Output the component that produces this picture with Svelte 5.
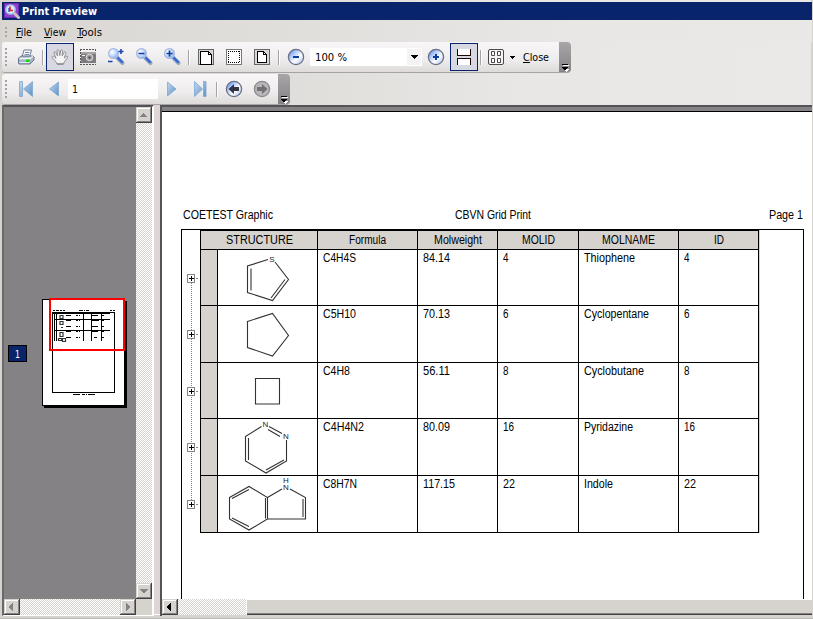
<script>
  const columns = [
    { title: 'Formula', w: 37 },
    { title: 'Molweight', w: 48 },
    { title: 'MOLID', w: 33 },
    { title: 'MOLNAME', w: 53 },
    { title: 'ID', w: 10 }
  ];

  // Each cell is [text, drawn width]; molecule coordinates are relative to the structure cell.
  const rows = [
    {
      cells: [['C4H4S', 33], ['84.14', 27], ['4', 5.5], ['Thiophene', 51], ['4', 5.5]],
      path: 'M50 9.500 L29.5 16 V42.5 L54.5 50.5 L70.5 29.5 L57 12 M33 18.500 V40.500 M67 29.500 L53 48',
      atoms: [['S', 54, 11.5]]
    },
    {
      cells: [['C5H10', 33], ['70.13', 27], ['6', 5.5], ['Cyclopentane', 65], ['6', 5.5]],
      path: 'M29.500 15.500 L54.500 7.500 L70.500 29.500 L54.500 50 L29.500 41.500 Z',
      atoms: []
    },
    {
      cells: [['C4H8', 27], ['56.11', 27], ['8', 5.5], ['Cyclobutane', 60], ['8', 5.5]],
      path: 'M37.500 15.500 H61.500 V41 H37.500 Z',
      atoms: []
    },
    {
      cells: [['C4H4N2', 41], ['80.09', 27], ['16', 11], ['Pyridazine', 49], ['16', 11]],
      path: 'M43.500 7.500 L27.500 17.500 V42 L48 54 L68.500 42 V21 M30.500 19 V41 M66 41 L48 51 M51 7.500 L64 14.500 M50 10.500 L62 17.500',
      atoms: [['N', 47.5, 8], ['N', 68, 20]]
    },
    {
      cells: [['C8H7N', 34], ['117.15', 32], ['22', 12], ['Indole', 29], ['22', 12]],
      path: 'M11.500 21.500 L31 10.500 L49.500 21.500 V43 L31 54 L11.500 43 Z M14 22.500 L31 13.500 M14 42 L31 50.500 M47.500 22 V42.500 M49.500 21.500 L64 13 M72 13 L87.500 21.500 V43 H49.500 M85 23 V41',
      atoms: [['N', 68, 14], ['H', 68, 7]]
    }
  ];
  const expanders = [278, 334, 391, 447, 504];
</script>

{#snippet label(text, w, base = 12, kind = 'grid')}
  <svg class="label {kind}" width={w} height="16"><text y={base} textLength={w} lengthAdjust="spacingAndGlyphs">{text}</text></svg>
{/snippet}

{#snippet grip()}
  <span class="grip"><i></i><i></i><i></i><i></i><i></i></span>
{/snippet}

{#snippet magnifier(kind)}
  <svg width="20" height="20" viewBox="0 0 20 20">
    <path d="M11 10.500 L16.500 16" stroke="#9aa6bd" stroke-width="4" stroke-linecap="round" />
    <path d="M11 10 L16 15" stroke="#2f68d8" stroke-width="2.400" stroke-linecap="round" />
    <circle cx="7.500" cy="6.500" r="4.900" fill="url(#glass)" stroke="#a9bbdc" stroke-width="1.200" />
    {#if kind === 'in'}<path d="M4.500 6.500 H10.500 M7.500 3.500 V9.500" stroke="#123a9c" stroke-width="1.700" />{/if}
    {#if kind === 'out'}<path d="M4.500 6.500 H10.500" stroke="#123a9c" stroke-width="1.700" />{/if}
    {#if kind === 'both'}<path d="M12.500 4.500 H17.500 M15 2 V7 M2 14.500 H6.500" stroke="#1746b0" stroke-width="1.600" />{/if}
  </svg>
{/snippet}

{#snippet ball(kind)}
  <svg width="18" height="18" viewBox="0 0 18 18">
    <circle cx="9" cy="9" r="7.600" fill={kind === 'fwd' ? '#b8b6b8' : 'url(#ball)'} stroke={kind === 'fwd' ? '#8c8a8c' : '#6b7180'} stroke-width="1.300" />
    {#if kind === 'minus'}<path d="M6 9 H12" stroke="#0a3c9c" stroke-width="2" />{/if}
    {#if kind === 'plus'}<path d="M6 9 H12 M9 6 V12" stroke="#0a3c9c" stroke-width="2" />{/if}
    {#if kind === 'back'}<path d="M3.500 9 L9 4 V7 H14 V11 H9 V14 Z" fill="#303442" />{/if}
    {#if kind === 'fwd'}<path d="M14.500 9 L9 4 V7 H4 V11 H9 V14 Z" fill="#737173" />{/if}
  </svg>
{/snippet}

{#snippet nav(kind)}
  <svg width="18" height="18" viewBox="0 0 18 18">
    {#if kind === 'first'}<path d="M2.500 1.500 H5.500 V16.500 H2.500 Z M15.500 1.500 V16.500 L6.500 9 Z" />{/if}
    {#if kind === 'prev'}<path d="M13.500 2 V16 L4.500 9 Z" />{/if}
    {#if kind === 'next'}<path d="M4.500 2 V16 L13 9 Z" />{/if}
    {#if kind === 'last'}<path d="M12.500 1.500 H15 V16.500 H12.500 Z M3.500 1.500 V16.500 L11.500 9 Z" />{/if}
  </svg>
{/snippet}

{#snippet tail()}
  <span class="tail">
    <svg width="12" height="31" viewBox="0 0 12 31" shape-rendering="crispEdges">
      <path d="M4 23 H10 V24 H4 Z M5 27 H10 V28 H9 V29 H8 V30 H7 V29 H6 V28 H5 Z" fill="#fff" />
      <path d="M3 22 H9 V23 H3 Z M3 25 H9 V26 H8 V27 H7 V28 H5 V27 H4 V26 H3 Z" fill="#000" />
    </svg>
  </span>
{/snippet}

{#snippet arrow(dir, color)}
  <span class="sbtn">
    <svg width="16" height="16" viewBox="0 0 16 16" shape-rendering="crispEdges" fill={color}>
      {#if dir === 'up'}<path d="M4 10 V9 H5 V8 H6 V7 H7 V6 H8 V7 H9 V8 H10 V9 H11 V10 Z" />{/if}
      {#if dir === 'down'}<path d="M4 6 H12 V7 H11 V8 H10 V9 H9 V10 H7 V9 H6 V8 H5 V7 H4 Z" />{/if}
      {#if dir === 'left'}<path d="M9 4 V12 H8 V11 H7 V10 H6 V9 H5 V7 H6 V6 H7 V5 H8 V4 Z" />{/if}
      {#if dir === 'right'}<path d="M6 4 V12 H7 V11 H8 V10 H9 V9 H10 V7 H9 V6 H8 V5 H7 V4 Z" />{/if}
    </svg>
  </span>
{/snippet}

<div class="window">
  <svg class="defs" width="0" height="0">
    <defs>
      <radialGradient id="glass" cx="35%" cy="35%" r="75%"><stop offset="0" stop-color="#fff" /><stop offset=".5" stop-color="#c5dbff" /><stop offset="1" stop-color="#7ca6ee" /></radialGradient>
      <linearGradient id="ball" x1="0" y1="0" x2="1" y2="1"><stop offset="0" stop-color="#2e64dc" /><stop offset=".3" stop-color="#a9c5ff" /><stop offset=".6" stop-color="#fff" /><stop offset="1" stop-color="#8fb0f4" /></linearGradient>
      <linearGradient id="tri" x1="0" y1="0" x2="1" y2="1"><stop offset="0" stop-color="#c4daee" /><stop offset="1" stop-color="#5d91c6" /></linearGradient>
    </defs>
  </svg>

  <header class="title">
    <svg width="16" height="16" viewBox="0 0 16 16">
      <rect width="15" height="15" fill="#6a2bb0" />
      <rect x="1" y="1" width="13" height="13" fill="#8d42cc" />
      <circle cx="6.500" cy="6.500" r="4.600" fill="#d9ecff" stroke="#a8c5ee" stroke-width="1.500" />
      <path d="M6 3.500 V7.500 H9" fill="none" stroke="#e2202c" stroke-width="1.600" />
      <path d="M5 5 V9" fill="none" stroke="#243ca0" stroke-width="1.200" />
      <path d="M10.500 10.500 L14.500 14.500" stroke="#c7c3c0" stroke-width="3" stroke-linecap="round" />
    </svg>
    {@render label('Print Preview', 75, 12, 'ui bold')}
  </header>

  <nav class="menu">
    <span class="grip short"><i></i><i></i><i></i></span>
    <span class="item first">{@render label('File', 16, 12, 'ui')}<u style:width="6px"></u></span>
    <span class="item view">{@render label('View', 22, 12, 'ui')}<u style:width="7px"></u></span>
    <span class="item tools">{@render label('Tools', 25, 12, 'ui')}<u style:width="6px"></u></span>
  </nav>

  <div class="bar main-bar">
    {@render grip()}
    <span class="slot">
      <svg width="18" height="18" viewBox="0 0 18 18">
        <path d="M7 2 H14.500 L12.500 9 H5 Z" fill="#fff" stroke="#6c7c98" />
        <path d="M8 4.500 H12.500 M7.500 6.500 H12" stroke="#6f86ae" />
        <path d="M1.500 10 L4.500 8 H15.500 L17 9 V12 L13 16 H2 L1.500 15 Z" fill="#aab5c6" stroke="#66758c" />
        <path d="M2.500 10.500 H12.500 L16 8.500" fill="none" stroke="#f4f7fb" stroke-width="1.300" />
        <path d="M2.500 14.500 H12.500" stroke="#e9edf3" stroke-width="1.200" />
        <rect x="9" y="11.500" width="3.500" height="2.500" fill="#15d515" />
      </svg>
    </span>
    <span class="sep"></span>
    <span class="slot on">
      <svg width="18" height="18" viewBox="0 0 18 18">
        <path d="M6 16 C5.500 13.500 2.500 11.500 1.200 9.500 C.8 8 2.500 7.800 3.500 9 L5 10.300 L3 5 C2.800 3.500 4.300 3.200 4.800 4.600 L6.600 8 L6 2.800 C6 1.300 7.700 1.200 8 2.600 L8.800 7.600 L9.700 2.600 C10 1.300 11.600 1.600 11.500 3 L11.200 8 L13.200 4.300 C13.900 3.100 15.200 3.800 14.800 5.200 L13.300 10 L15.500 8.300 C16.700 7.800 17.200 9 16.200 10 L13.500 13.500 L12.500 16 Z" fill="#f5f4f4" stroke="#929092" stroke-width="1" />
        <path d="M6 16 H12.500" stroke="#777" />
      </svg>
    </span>
    <span class="slot">
      <svg width="18" height="18" viewBox="0 0 18 18" shape-rendering="crispEdges">
        <path d="M1.500 1 V17 M1 1.500 H17 M1 16.500 H17 M16.500 1 V17" stroke="#565556" stroke-dasharray="2 1" fill="none" />
        <rect x="2" y="4" width="15" height="11" fill="#7d7b7d" />
        <rect x="2" y="4" width="15" height="2" fill="#a5a3a5" />
        <g shape-rendering="auto">
          <circle cx="10.500" cy="9.500" r="3.300" fill="#a2a0a2" stroke="#dcdadc" />
          <circle cx="10.500" cy="9.500" r="1.300" fill="#5a585a" />
        </g>
        <rect x="3" y="7" width="3" height="1" fill="#eee" />
      </svg>
    </span>
    <span class="slot">{@render magnifier('both')}</span>
    <span class="slot">{@render magnifier('out')}</span>
    <span class="slot">{@render magnifier('in')}</span>
    <span class="sep"></span>
    <span class="slot">
      <svg width="16" height="16" viewBox="0 0 16 16" shape-rendering="crispEdges">
        <rect x=".5" y=".5" width="15" height="15" fill="#dad7da" stroke="#666" />
        <path d="M2.500 15 V2.500 H10.500 L13.500 5.500 V15 Z" fill="#fff" stroke="#000" /><path d="M10.500 2 V5.500 H14" fill="none" stroke="#000" />
      </svg>
    </span>
    <span class="slot">
      <svg width="16" height="16" viewBox="0 0 16 16" shape-rendering="crispEdges">
        <rect x=".5" y=".5" width="15" height="15" fill="#fff" stroke="#777" />
        <path d="M2 2.500 H14 M2 13.500 H14 M2.500 2 V14 M13.500 2 V14" fill="none" stroke="#000" stroke-dasharray="1 1" />
      </svg>
    </span>
    <span class="slot">
      <svg width="16" height="16" viewBox="0 0 16 16" shape-rendering="crispEdges">
        <rect x=".5" y=".5" width="15" height="15" fill="#dad7da" stroke="#666" />
        <path d="M3.500 2.500 H9.500 L12.500 5.500 V13.500 H3.500 Z" fill="#fff" stroke="#000" /><path d="M9.500 2 V5.500 H13" fill="none" stroke="#000" />
      </svg>
    </span>
    <span class="sep"></span>
    <span class="slot">{@render ball('minus')}</span>
    <span class="combo">
      {@render label('100 %', 32, 12, 'ui')}
      <span class="drop"><svg width="7" height="4" shape-rendering="crispEdges"><path d="M0 0 H7 V1 H6 V2 H5 V3 H4 V4 H3 V3 H2 V2 H1 V1 H0 Z" /></svg></span>
    </span>
    <span class="slot">{@render ball('plus')}</span>
    <span class="slot on">
      <svg width="16" height="18" viewBox="0 0 16 18" shape-rendering="crispEdges">
        <path d="M2 1 H14 V7 H2 Z M2 11 H14 V17 H2 Z" fill="#fff" />
        <path d="M1.500 1 V7.500 H14.500 V1 M1.500 17 V10.500 H14.500 V17" fill="none" stroke="#210808" />
      </svg>
    </span>
    <span class="sep"></span>
    <span class="tiles">
      <svg width="16" height="16" viewBox="0 0 16 16">
        <rect x=".5" y=".5" width="15" height="15" rx="1.500" fill="#f6f4f5" stroke="#4a4a4a" />
        <path d="M3.500 2.500 H6.500 V6.500 H3.500 Z M9.500 2.500 H12.500 V6.500 H9.500 Z M3.500 9.500 H6.500 V13.500 H3.500 Z M9.500 9.500 H12.500 V13.500 H9.500 Z" fill="#fff" stroke="#4a4a4a" />
      </svg>
      <svg width="5" height="3" shape-rendering="crispEdges"><path d="M0 0 H5 V1 H4 V2 H3 V3 H2 V2 H1 V1 H0 Z" /></svg>
    </span>
    <span class="item close">{@render label('Close', 26, 12, 'ui')}<u style:width="7px"></u></span>
    {@render tail()}
  </div>

  <div class="bar page-bar">
    {@render grip()}
    <span class="slot nav">{@render nav('first')}</span>
    <span class="slot nav">{@render nav('prev')}</span>
    <span class="page-no">{@render label('1', 6, 12, 'ui')}</span>
    <span class="slot nav">{@render nav('next')}</span>
    <span class="slot nav">{@render nav('last')}</span>
    <span class="sep"></span>
    <span class="slot">{@render ball('back')}</span>
    <span class="slot">{@render ball('fwd')}</span>
    {@render tail()}
  </div>

  <div class="body">
    <section class="thumbs">
      <div class="canvas">
        <span class="badge">{@render label('1', 5, 12, 'ui')}</span>
        <svg class="thumb" width="86" height="110" viewBox="0 0 86 110" shape-rendering="crispEdges">
          <rect x="2" y="3" width="83" height="107" />
          <rect x=".5" y="1.500" width="82" height="106" fill="#fff" stroke="#000" />
          <rect x="10.500" y="14.500" width="62" height="80" fill="none" stroke="#000" />
          <g stroke="#000" fill="none">
            <path d="M11 12.500 H23" stroke-dasharray="2 1 3 1" />
            <path d="M37 12.500 H47" stroke-dasharray="4 1 1 1" />
            <path d="M68 12.500 H73" stroke-dasharray="2 1" />
            <path d="M11 15.500 H68 M13 21.500 H68 M13 32.500 H68 M12.500 15 V43 M14.500 15 V43 M41.500 15 V43 M49.500 15 V43 M59.500 15 V43" />
            <path d="M24 17.500 H29 M24 22.500 H29 M24 28.500 H29 M24 33.500 H29 M24 39.500 H29 M50 17.500 H56 M50 22.500 H57 M50 28.500 H56 M50 33.500 H56 M52 39.500 H55 M60 17.500 H62 M60 22.500 H62 M60 28.500 H62 M60 33.500 H62 M60 39.500 H62" />
            <path d="M34 17.500 H38 M34 22.500 H38 M34 28.500 H38 M34 33.500 H38 M34 39.500 H38" stroke-dasharray="2 1" />
            <path d="M18 17.500 H21 V20.500 H18 Z M18 23.500 H21 V26.500 H18 Z M19 29.500 H21 M18 34.500 H21 V38.500 H18 Z M16.500 40.500 H19.500 V42.500 H16.500 Z M20.500 40.500 H23.500 V43.500 H20.500 Z" stroke="#333" stroke-width="1.200" shape-rendering="auto" />
            <path d="M31 96.500 H54" stroke-dasharray="7 2 3 1 1 1" />
          </g>
          <rect x="8" y="1" width="74" height="51" fill="none" stroke="#f00" stroke-width="2" />
        </svg>
      </div>
      <div class="vscroll">{@render arrow('up', '#848284')}{@render arrow('down', '#848284')}</div>
      <div class="hscroll">{@render arrow('left', '#848284')}{@render arrow('right', '#848284')}</div>
    </section>

    <section class="preview">
      <div class="paper">
        <div class="caption">
          <span>{@render label('COETEST Graphic', 90)}</span>
          {@render label('CBVN Grid Print', 76)}
          <span>{@render label('Page 1', 34)}</span>
        </div>
        <div class="frame">
          <svg class="tree" width="18" height="302" viewBox="182 230 18 302" shape-rendering="crispEdges">
            <path d="M191.500 283 V500" stroke="#848284" stroke-dasharray="1 1" />
            {#each expanders as y}
              <path d="M196 {y + .5} H199" stroke="#848284" stroke-dasharray="2 1" />
              <rect x="187.500" y={y - 3.5} width="7" height="8" fill="#fff" stroke="#848284" />
              <path d="M189 {y + .5} H194 M191.500 {y - 2} V{y + 3}" stroke="#000" />
            {/each}
          </svg>
          <div class="table">
            <div class="row head">
              <div class="cell wide">{@render label('STRUCTURE', 67)}</div>
              {#each columns as c}<div class="cell">{@render label(c.title, c.w)}</div>{/each}
            </div>
            {#each rows as r}
              <div class="row">
                <div class="cell selector"></div>
                <div class="cell structure">
                  <svg width="99" height="56" viewBox="0 0 99 56">
                    <path d={r.path} fill="none" stroke="#333" stroke-width="1.100" />
                    {#each r.atoms as [s, x, y]}<text {x} {y}>{s}</text>{/each}
                  </svg>
                </div>
                {#each r.cells as [text, w]}<div class="cell">{@render label(text, w)}</div>{/each}
              </div>
            {/each}
          </div>
        </div>
      </div>
      <div class="hscroll wide-scroll">{@render arrow('left', '#000')}<span class="thumb-bar"></span></div>
    </section>
  </div>
</div>

<style>
  :global(body) { margin: 0; overflow: hidden; }
  .window { box-sizing: border-box; width: 813px; height: 619px; padding: 2px 1px 3px 2px; background: linear-gradient(90deg, #d6d3ce, #e8e7e5 65%, #eae9e7) 0 0 / 811px 105px no-repeat #d6d3ce; border-bottom: 1px solid #bbb8b8; display: flex; flex-direction: column; overflow: hidden; }
  svg { display: block; flex: none; }
  .defs { position: absolute; }
  .label { overflow: visible; }
  .grid { font: 12px "Liberation Sans", Arial, sans-serif; }
  .ui { font: 11px "DejaVu Sans Condensed", "DejaVu Sans", sans-serif; }
  .bold { font-weight: bold; fill: #fff; }
  .title { height: 18px; flex: none; background: #08246b; display: flex; align-items: center; padding-left: 2px; gap: 2px; }
  .menu { height: 22px; padding-top: 1px; box-sizing: border-box; flex: none; display: flex; align-items: center; background: linear-gradient(90deg, #d9d6d2, #e8e7e5 70%, #e9e8e6); }
  .item { display: flex; flex-direction: column; position: relative; }
  .item u { position: absolute; left: 0; top: 13px; height: 1px; background: #000; }
  .first { margin-left: 4px; }
  .view { margin-left: 12px; }
  .tools { margin-left: 11px; }
  .grip { width: 10px; flex: none; display: flex; flex-direction: column; gap: 2px; padding-left: 3px; box-sizing: border-box; }
  .grip i { width: 2px; height: 2px; background: #a5a2a2; }
  .bar { height: 31px; flex: none; box-sizing: border-box; display: flex; align-items: center; border-bottom: 1px solid #a6a3a6; border-radius: 3px 4px 4px 3px; background: linear-gradient(#f8f6f6, #eeecec 60%, #dedada); overflow: hidden; }
  .main-bar { width: 569px; margin-bottom: 1px; }
  .page-bar { width: 288px; }
  .slot { width: 28px; height: 28px; flex: none; box-sizing: border-box; display: flex; align-items: center; justify-content: center; }
  .on { border: 1px solid #08246b; background: #d7d8e1; }
  .nav { fill: url(#tri); stroke: #7da7d0; stroke-width: .8; }
  .sep { width: 6px; height: 15px; flex: none; background: linear-gradient(#a6a3a6, #a6a3a6) 2px 0 / 1px 100% no-repeat, linear-gradient(#fff, #fff) 3px 0 / 1px 100% no-repeat; }
  .combo { width: 112px; height: 18px; background: #fff; display: flex; align-items: center; justify-content: space-between; padding-left: 5px; box-sizing: border-box; }
  .drop { width: 14px; height: 16px; margin-right: 1px; background: #f4f2f2; display: flex; align-items: center; justify-content: center; }
  .page-no { width: 90px; height: 20px; box-sizing: border-box; padding: 2px 4px; background: #fff; }
  .tiles { display: flex; align-items: center; gap: 6px; margin-left: 4px; }
  .close { margin-left: 8px; }
  .tail { margin-left: auto; width: 12px; height: 31px; background: linear-gradient(#a8a6a8, #848284); flex: none; }

  .body { flex: 1; min-height: 0; display: flex; background: #ded6d6; border-bottom: 1px solid #fff; }
  .thumbs { box-sizing: border-box; width: 152px; height: 511px; display: grid; grid-template: 492px 16px / 132px 16px; background: #d6d3ce; border: solid #fff; border-width: 2px 2px 1px 2px; border-top-color: #555355; border-left: 2px solid #6a686a; margin-right: 6px; }
  .canvas { background: #848284; position: relative; }
  .badge { position: absolute; left: 4px; top: 238px; width: 19px; height: 17px; box-sizing: border-box; border: 1px solid #000; background: #08246b; fill: #fff; display: flex; justify-content: center; }
  .thumb { position: absolute; left: 38px; top: 191px; }
  .vscroll, .hscroll { display: flex; justify-content: space-between; background: repeating-conic-gradient(#fff 0 25%, #d6d3ce 0 50%) 0 0 / 2px 2px; }
  .vscroll { flex-direction: column; }
  .sbtn { width: 16px; height: 16px; flex: none; background: #d6d3ce; box-shadow: inset -1px -1px #424142, inset 1px 1px #d6d3ce, inset -2px -2px #848284, inset 2px 2px #fff; }
  .preview { flex: 1; min-width: 0; height: 511px; box-sizing: border-box; border-top: 2px solid #555355; border-left: 2px solid #555355; display: flex; flex-direction: column; }
  .paper { height: 492px; flex: none; box-sizing: border-box; background: #fff; border-top: 4px solid #848284; box-shadow: inset 0 1px #000; padding: 96px 8px 0 19px; overflow: hidden; }
  .caption { display: grid; grid-template-columns: 1fr 76px 1fr; padding: 0 1px 0 2px; height: 22px; }
  .caption span:last-child { justify-self: end; }
  .frame { width: 623px; height: 372px; box-sizing: border-box; border: 1px solid #000; border-bottom: 0; display: flex; }
  .table { width: 559px; height: 303px; box-sizing: border-box; border: 1px solid #000; border-left: 0; box-shadow: 1px 0 #d6d3ce; display: grid; grid-template-rows: 18px 56px 57px 56px 57px 57px; }
  .row { display: grid; grid-template-columns: 17px 100px 100px 80px 81px 100px 80px; }
  .cell { border-left: 1px solid #000; padding-left: 5px; overflow: hidden; }
  .row:not(.head) { border-top: 1px solid #000; }
  .wide { grid-column: span 2; }
  .head .cell { background: #d6d3ce; padding: 1px 0 0; display: flex; justify-content: center; }
  .row .selector { background: #d6d3ce; }
  .structure { padding: 0; }
  .structure text { font: 8px "Liberation Sans", Arial, sans-serif; text-anchor: middle; fill: #222; }
  .caption { transform: none; }
  .wide-scroll { height: 16px; }
  .thumb-bar { width: 566px; flex: none; background: #d6d3ce; box-shadow: inset 1px 1px #fff, inset 0 -1px #424142, inset 0 -2px #848284; }
</style>
